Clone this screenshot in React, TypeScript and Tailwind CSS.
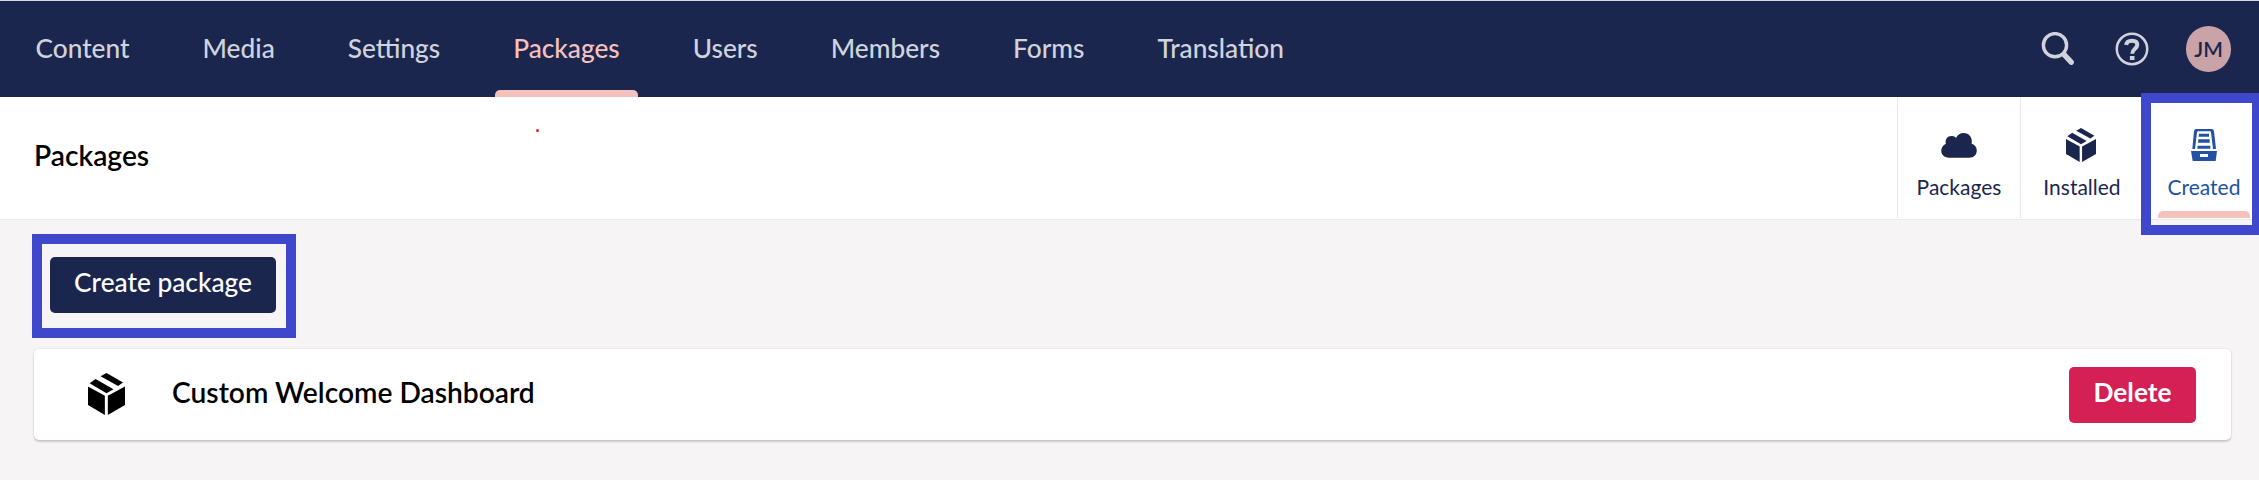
import React from "react";

const sections = ["Content", "Media", "Settings", "Packages", "Users", "Members", "Forms", "Translation"];

function BoxIcon({ className }: { className: string }) {
  return (
    <svg viewBox="54 38 112 127" preserveAspectRatio="none" className={className} fill="currentColor">
      <path d="M54 79 105 107V165L54 135Z" />
      <path d="M166 79 114 107V165L166 135Z" />
      <path d="M110 38 160 67 145 77 92 48Z" />
      <path d="M77 56 131 87 110 99 59 69Z" />
    </svg>
  );
}

function CloudIcon() {
  return (
    <svg viewBox="0 0 108 76" className="h-[25px] w-9" fill="currentColor">
      <path d="M24 75C8 75 0 65 0 54C0 44 6 37 14 33C11 19 19 9 31 9C37 9 41 11 45 15C50 5 58 0 68 0C84 0 94 12 93 28C92 31 92 32 93 33C102 36 108 44 108 53C108 66 99 75 85 75Z" />
    </svg>
  );
}

function DrawerIcon() {
  return (
    <svg viewBox="0 0 78 96" className="h-8 w-[26px]" fill="currentColor">
      <path d="M4 60 9 7Q10 0 16 0H62Q68 0 69 7L75 60H66L60 10Q60 7 57 7H21Q19 7 18 10L12 60Z" />
      <path d="M24 14H54V23H23Z M22 31H56V41H21Z M20 50H58V59H19Z" />
      <path fillRule="evenodd" d="M0 66H78L74 96H5Z M27 75V84H51V75Z" />
    </svg>
  );
}

function SearchIcon() {
  return (
    <svg viewBox="0 0 34 34" className="h-[34px] w-[34px]" fill="none" stroke="currentColor">
      <circle cx="14" cy="13.2" r="11.6" strokeWidth="3.4" />
      <path d="M21.5 21 24 23.5" strokeWidth="5" />
      <path d="M23 22.5 30.2 30.2" strokeWidth="5.4" strokeLinecap="round" />
    </svg>
  );
}

function HelpIcon() {
  return (
    <svg viewBox="0 0 34 34" className="h-[34px] w-[34px]" fill="none" stroke="currentColor">
      <circle cx="17" cy="17" r="15.2" strokeWidth="2.5" />
      <path d="M11.2 13C11.5 10 13.5 8.8 17 8.8C20.5 8.8 22.3 10.5 22.3 12.8C22.3 16.8 17.2 16.8 17.2 21.8" strokeWidth="4" />
      <path d="M17.2 24V28" strokeWidth="4.6" />
    </svg>
  );
}

export default function App() {
  return (
    <div className="relative flex h-[480px] w-[2259px] flex-col overflow-hidden bg-[#f6f4f5] font-['Lato',sans-serif]">
      <header className="flex h-[97px] shrink-0 justify-between border-t border-[#d5dbdc] bg-[#1b264f] pr-7">
        <nav className="-ml-px flex">
          {sections.map((name) => {
            const active = name === "Packages";
            return (
              <a key={name} className={`relative flex items-center px-[36.5px] pb-[2px] text-[26.25px] font-medium leading-none ${active ? "text-[#f5c1bc]" : "text-[#d1d3dc]"}`}>
                <span>{name}</span>
                {active && <span className="absolute bottom-0 left-[18px] right-[18px] h-[7px] rounded-t-[5px] bg-[#f5c1bc]" />}
              </a>
            );
          })}
        </nav>
        <div className="flex items-center text-[#d1d3dc]">
          <SearchIcon />
          <span className="ml-[39.5px]"><HelpIcon /></span>
          <span className="ml-[37.5px] flex h-[46px] w-[45px] items-center justify-center rounded-full bg-[#c9a3a7] text-[21px] font-semibold text-[#1b264f]">JM</span>
        </div>
      </header>

      <section className="flex h-[123px] shrink-0 justify-between border-b border-[#e9e9eb] bg-white">
        <h1 className="pl-[34px] pt-[40px] text-[28.2px] font-semibold leading-[36px] text-black">Packages</h1>
        <div className="flex h-[121px] text-[21px] leading-[28px] text-[#1b264f]">
          <a className="flex w-[123px] flex-col items-center border-l border-[#e9e9eb]">
            <span className="flex h-[76px] items-end pb-[15px]"><CloudIcon /></span>
            Packages
          </a>
          <a className="flex w-[123px] flex-col items-center border-l border-[#e9e9eb]">
            <span className="flex h-[76px] items-end pb-[11px] pr-0.5"><BoxIcon className="h-[34px] w-[30px]" /></span>
            Installed
          </a>
          <a className="relative flex w-[116px] flex-col items-center pl-[6px] text-[#2152a3]">
            <span className="flex h-[76px] items-end pb-[12px]"><DrawerIcon /></span>
            Created
            <span className="absolute bottom-0 left-[15px] h-[7px] w-[92px] rounded-t-[5px] bg-[#f5c1bc]" />
          </a>
        </div>
      </section>

      <main className="flex flex-col px-[34px] pr-7">
        <button className="ml-4 mt-[37px] h-14 w-[226px] rounded-[5px] bg-[#1b264f] pb-1 text-[26.25px] font-medium text-white">Create package</button>
        <div className="mt-9 flex h-[91px] items-center rounded-[5px] bg-white pl-[54px] pr-[35px] shadow-[0_2px_2px_rgba(0,0,0,0.16),0_0_1px_1px_rgba(0,0,0,0.04)]">
          <BoxIcon className="-mt-0.5 h-[42px] w-[37px]" />
          <h2 className="ml-[47px] flex-1 pb-1 text-[28.2px] font-semibold text-black">Custom Welcome Dashboard</h2>
          <button className="h-14 w-[127px] rounded-[5px] bg-[#d42054] pb-1 text-[26.25px] font-bold text-white">Delete</button>
        </div>
      </main>

      <div className="absolute left-[32px] top-[234px] h-[104px] w-[264px] border-[10px] border-[#3f48cc]" />
      <div className="absolute left-[2141px] top-[93px] h-[142px] w-[121px] border-[10px] border-[#3f48cc]" />
      <div className="absolute left-[536px] top-[129px] h-[3px] w-[3px] rounded-full bg-[#ed1c24]" />
    </div>
  );
}
